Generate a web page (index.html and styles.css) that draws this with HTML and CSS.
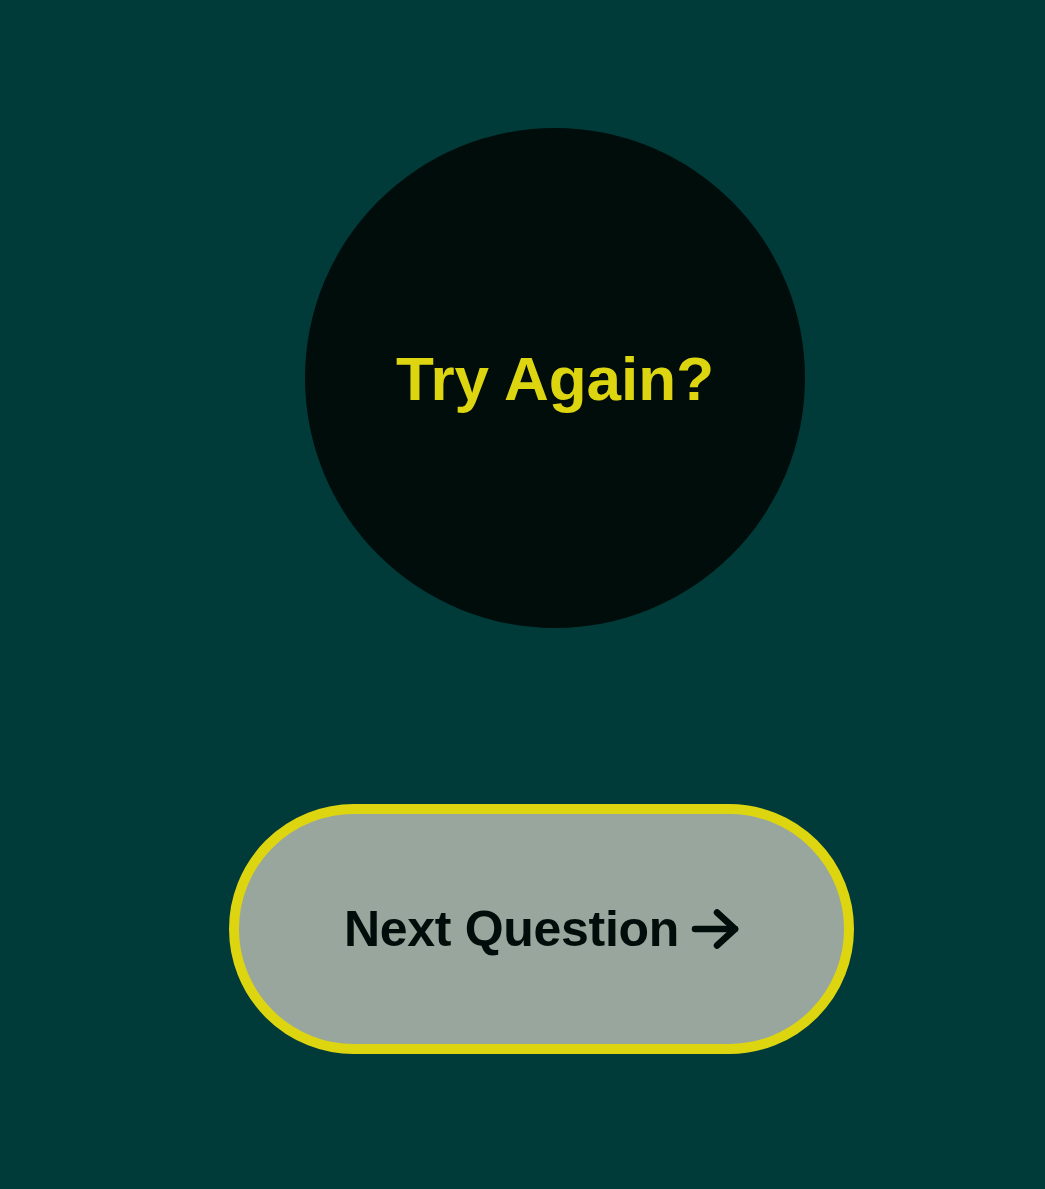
FILE: index.html
```html
<!DOCTYPE html>
<html>
<head>
<meta charset="utf-8">
<link rel="stylesheet" href="styles.css">
</head>
<body>
<main class="page">
  <div class="circle"><span class="circle-text">Try Again?</span></div>
  <button class="next-btn"><span>Next Question</span>
    <svg class="arrow" width="48" height="40" viewBox="0 0 48 40" fill="none" stroke="currentColor" stroke-width="6.5" stroke-linecap="round" stroke-linejoin="round"><path d="M4 20h40"/><path d="M26 3.5l18 16.5-18 16.5"/></svg>
  </button>
</main>
</body>
</html>
```
FILE: styles.css
```css
html, body {
  margin: 0;
  padding: 0;
  background: #003b3a;
  width: 1045px;
  height: 1189px;
  overflow: hidden;
}
.page {
  display: flex;
  flex-direction: column;
  align-items: flex-start;
  padding-top: 128px;
  font-family: "Liberation Sans", Arial, sans-serif;
}
.circle {
  margin-left: 305px;
  width: 500px;
  height: 500px;
  border-radius: 50%;
  background: #000d0b;
  display: flex;
  align-items: center;
  justify-content: center;
}
.circle-text {
  color: #ddd510;
  font-weight: 700;
  font-size: 62px;
  line-height: 1;
  margin-top: 2px;
}
.next-btn {
  margin-top: 176px;
  margin-left: 229px;
  width: 625px;
  height: 250px;
  box-sizing: border-box;
  border: 10px solid #ddd510;
  border-radius: 125px;
  background: #98a69d;
  color: #000d0b;
  font-family: "Liberation Sans", Arial, sans-serif;
  font-weight: 700;
  font-size: 50px;
  letter-spacing: -0.3px;
  display: flex;
  align-items: center;
  justify-content: center;
  gap: 12px;
  padding: 0;
}
.arrow {
  display: block;
}
```
